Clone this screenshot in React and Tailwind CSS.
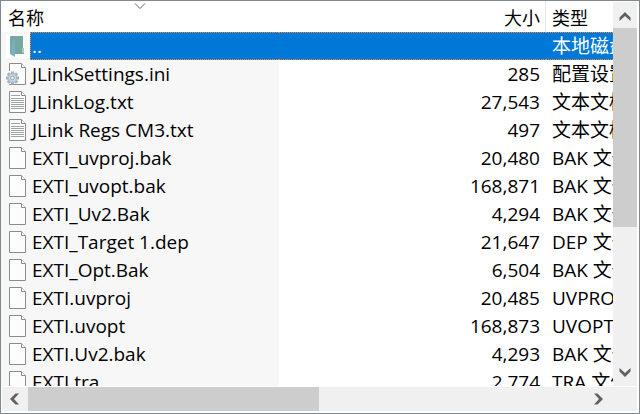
import { useState } from 'react';

const files = [
  { name: '..', size: '', type: '本地磁盘', icon: 'folder' },
  { name: 'JLinkSettings.ini', size: '285', type: '配置设置', icon: 'settings' },
  { name: 'JLinkLog.txt', size: '27,543', type: '文本文档', icon: 'text' },
  { name: 'JLink Regs CM3.txt', size: '497', type: '文本文档', icon: 'text' },
  { name: 'EXTI_uvproj.bak', size: '20,480', type: 'BAK 文件', icon: 'blank' },
  { name: 'EXTI_uvopt.bak', size: '168,871', type: 'BAK 文件', icon: 'blank' },
  { name: 'EXTI_Uv2.Bak', size: '4,294', type: 'BAK 文件', icon: 'blank' },
  { name: 'EXTI_Target 1.dep', size: '21,647', type: 'DEP 文件', icon: 'blank' },
  { name: 'EXTI_Opt.Bak', size: '6,504', type: 'BAK 文件', icon: 'blank' },
  { name: 'EXTI.uvproj', size: '20,485', type: 'UVPROJ 文件', icon: 'blank' },
  { name: 'EXTI.uvopt', size: '168,873', type: 'UVOPT 文件', icon: 'blank' },
  { name: 'EXTI.Uv2.bak', size: '4,293', type: 'BAK 文件', icon: 'blank' },
  { name: 'EXTI.tra', size: '2,774', type: 'TRA 文件', icon: 'blank' },
];

const teeth = [0, 45, 90, 135];

function FileIcon({ kind }) {
  if (kind === 'folder') {
    return (
      <svg width="23" height="24" viewBox="0 0 23 24" className="shrink-0 bg-white" aria-hidden="true">
        <defs>
          <linearGradient id="flap" x1="0" y1="0" x2="1" y2="1">
            <stop offset="0" stopColor="#6fa3a6" />
            <stop offset="1" stopColor="#82b8cc" />
          </linearGradient>
        </defs>
        <path d="M5 2h12v12h1v6H8l-4-1V3z" fill="#76a8a2" />
        <path d="M16 14h2v5h-2z" fill="#a9c9c4" />
        <path d="M4 2.5l5 2.5v18l-5-3z" fill="url(#flap)" />
      </svg>
    );
  }

  return (
    <svg width="23" height="24" viewBox="0 0 23 24" className="shrink-0" aria-hidden="true">
      <path d="M3.5 1.5h12l4 4v17h-16z" fill="#fbfcfc" stroke="#8b8b8b" />
      <path d="M15.5 1.5v4h4" fill="#fff" stroke="#8b8b8b" />
      {kind === 'text' && (
        <path d="M5 5.5h9M5 8.5h13M5 10.5h13M5 12.5h13M5 14.5h13M5 16.5h13M5 18.5h13" stroke="#a2a2a2" />
      )}
      {kind === 'settings' && (
        <g>
          <path d="M0 9h5v13H0z" fill="#f7f7f7" />
          {teeth.map((angle) => (
            <rect key={angle} x="5" y="9.5" width="3" height="13" fill="#9fb0bd" transform={`rotate(${angle} 6.5 16)`} />
          ))}
          <circle cx="6.5" cy="16" r="4.9" fill="#aebfcb" />
          <circle cx="6.5" cy="16" r="3.6" fill="#c9d8e2" />
          <circle cx="6.5" cy="16" r="1.8" fill="#f7f9fa" stroke="#8798a5" strokeWidth=".9" />
        </g>
      )}
    </svg>
  );
}

function ScrollButton({ label, d }) {
  return (
    <button type="button" aria-label={label} className="flex h-6 w-6 shrink-0 items-center justify-center">
      <svg width="12" height="12" viewBox="0 0 12 12" aria-hidden="true">
        <path d={d} fill="#606060" />
      </svg>
    </button>
  );
}

function FileRow({ file, selected, onSelect }) {
  const mark = selected ? 'border-[#ff8728] bg-[#0078d7] text-white' : 'border-transparent';

  return (
    <tr onClick={onSelect} aria-selected={selected}>
      <td className="bg-[#f7f7f7] p-0">
        <div className="flex h-7 items-center gap-px pl-[5px]">
          <FileIcon kind={file.icon} />
          <div className={`h-7 flex-1 border-y border-l border-dotted pl-px ${mark}`}>{file.name}</div>
        </div>
      </td>
      <td className="p-0">
        <div className={`h-7 border-y border-dotted pr-1.5 text-right ${mark}`}>{file.size}</div>
      </td>
      <td className="p-0">
        <div className={`h-7 overflow-hidden border-y border-dotted pl-1.5 ${mark}`}>{file.type}</div>
      </td>
    </tr>
  );
}

function App() {
  const [selected, setSelected] = useState('..');

  return (
    <div className="flex h-screen flex-col border border-[#828790] bg-white pr-0.5 pb-px font-['Open_Sans','Noto_Sans_CJK_SC',sans-serif] text-[19px] leading-[26px] text-black">
      <div className="flex min-h-0 flex-1">
        {/* File list */}
        <div className="min-w-0 flex-1 overflow-hidden">
          <table className="w-full table-fixed border-separate border-spacing-0 whitespace-nowrap">
            <colgroup>
              <col className="w-[278px]" />
              <col />
              <col className="w-[67px]" />
            </colgroup>
            <thead>
              <tr className="h-[31px] text-left text-[18px] leading-[26px]">
                <th className="relative p-0 pt-0.5 pl-[7px] font-normal">
                  名称
                  <svg width="12" height="7" viewBox="0 0 12 7" className="absolute top-0.5 left-1/2 -translate-x-1/2" aria-hidden="true">
                    <path d="M1 .5l5 5 5-5" fill="none" stroke="#606060" />
                  </svg>
                </th>
                <th className="border-r border-[#e5e5e5] p-0 pt-0.5 pr-[5px] text-right font-normal">大小</th>
                <th className="overflow-hidden p-0 pt-0.5 pl-1.5 font-normal">类型</th>
              </tr>
            </thead>
            <tbody>
              {files.map((file) => (
                <FileRow
                  key={file.name}
                  file={file}
                  selected={file.name === selected}
                  onSelect={() => setSelected(file.name)}
                />
              ))}
            </tbody>
          </table>
        </div>

        {/* Vertical scrollbar */}
        <div className="mt-px flex w-6 flex-col bg-[#f0f0f0]">
          <div className="h-[26px] pt-0.5">
            <ScrollButton label="Scroll up" d="M.5 11V7.500L6 2l5.500 5.500V11L6 6z" />
          </div>
          <div className="flex-1">
            <div className="h-3/5 bg-[#cdcdcd]"></div>
          </div>
          <div className="h-[26px]">
            <ScrollButton label="Scroll down" d="M.5 2v3.500L6 11l5.500-5.500V2L6 7z" />
          </div>
        </div>
      </div>

      {/* Horizontal scrollbar */}
      <div className="ml-px border-y border-white">
        <div className="flex h-6 bg-[#f0f0f0] pr-[26px]">
          <ScrollButton label="Scroll left" d="M11 .5H7.500L2 6l5.500 5.500H11L6 6z" />
          <div className="ml-0.5 flex-1">
            <div className="h-full w-[52%] bg-[#cdcdcd]"></div>
          </div>
          <ScrollButton label="Scroll right" d="M1 .5h3.500L10 6l-5.500 5.500H1L6 6z" />
        </div>
      </div>
    </div>
  );
}

export default App;
